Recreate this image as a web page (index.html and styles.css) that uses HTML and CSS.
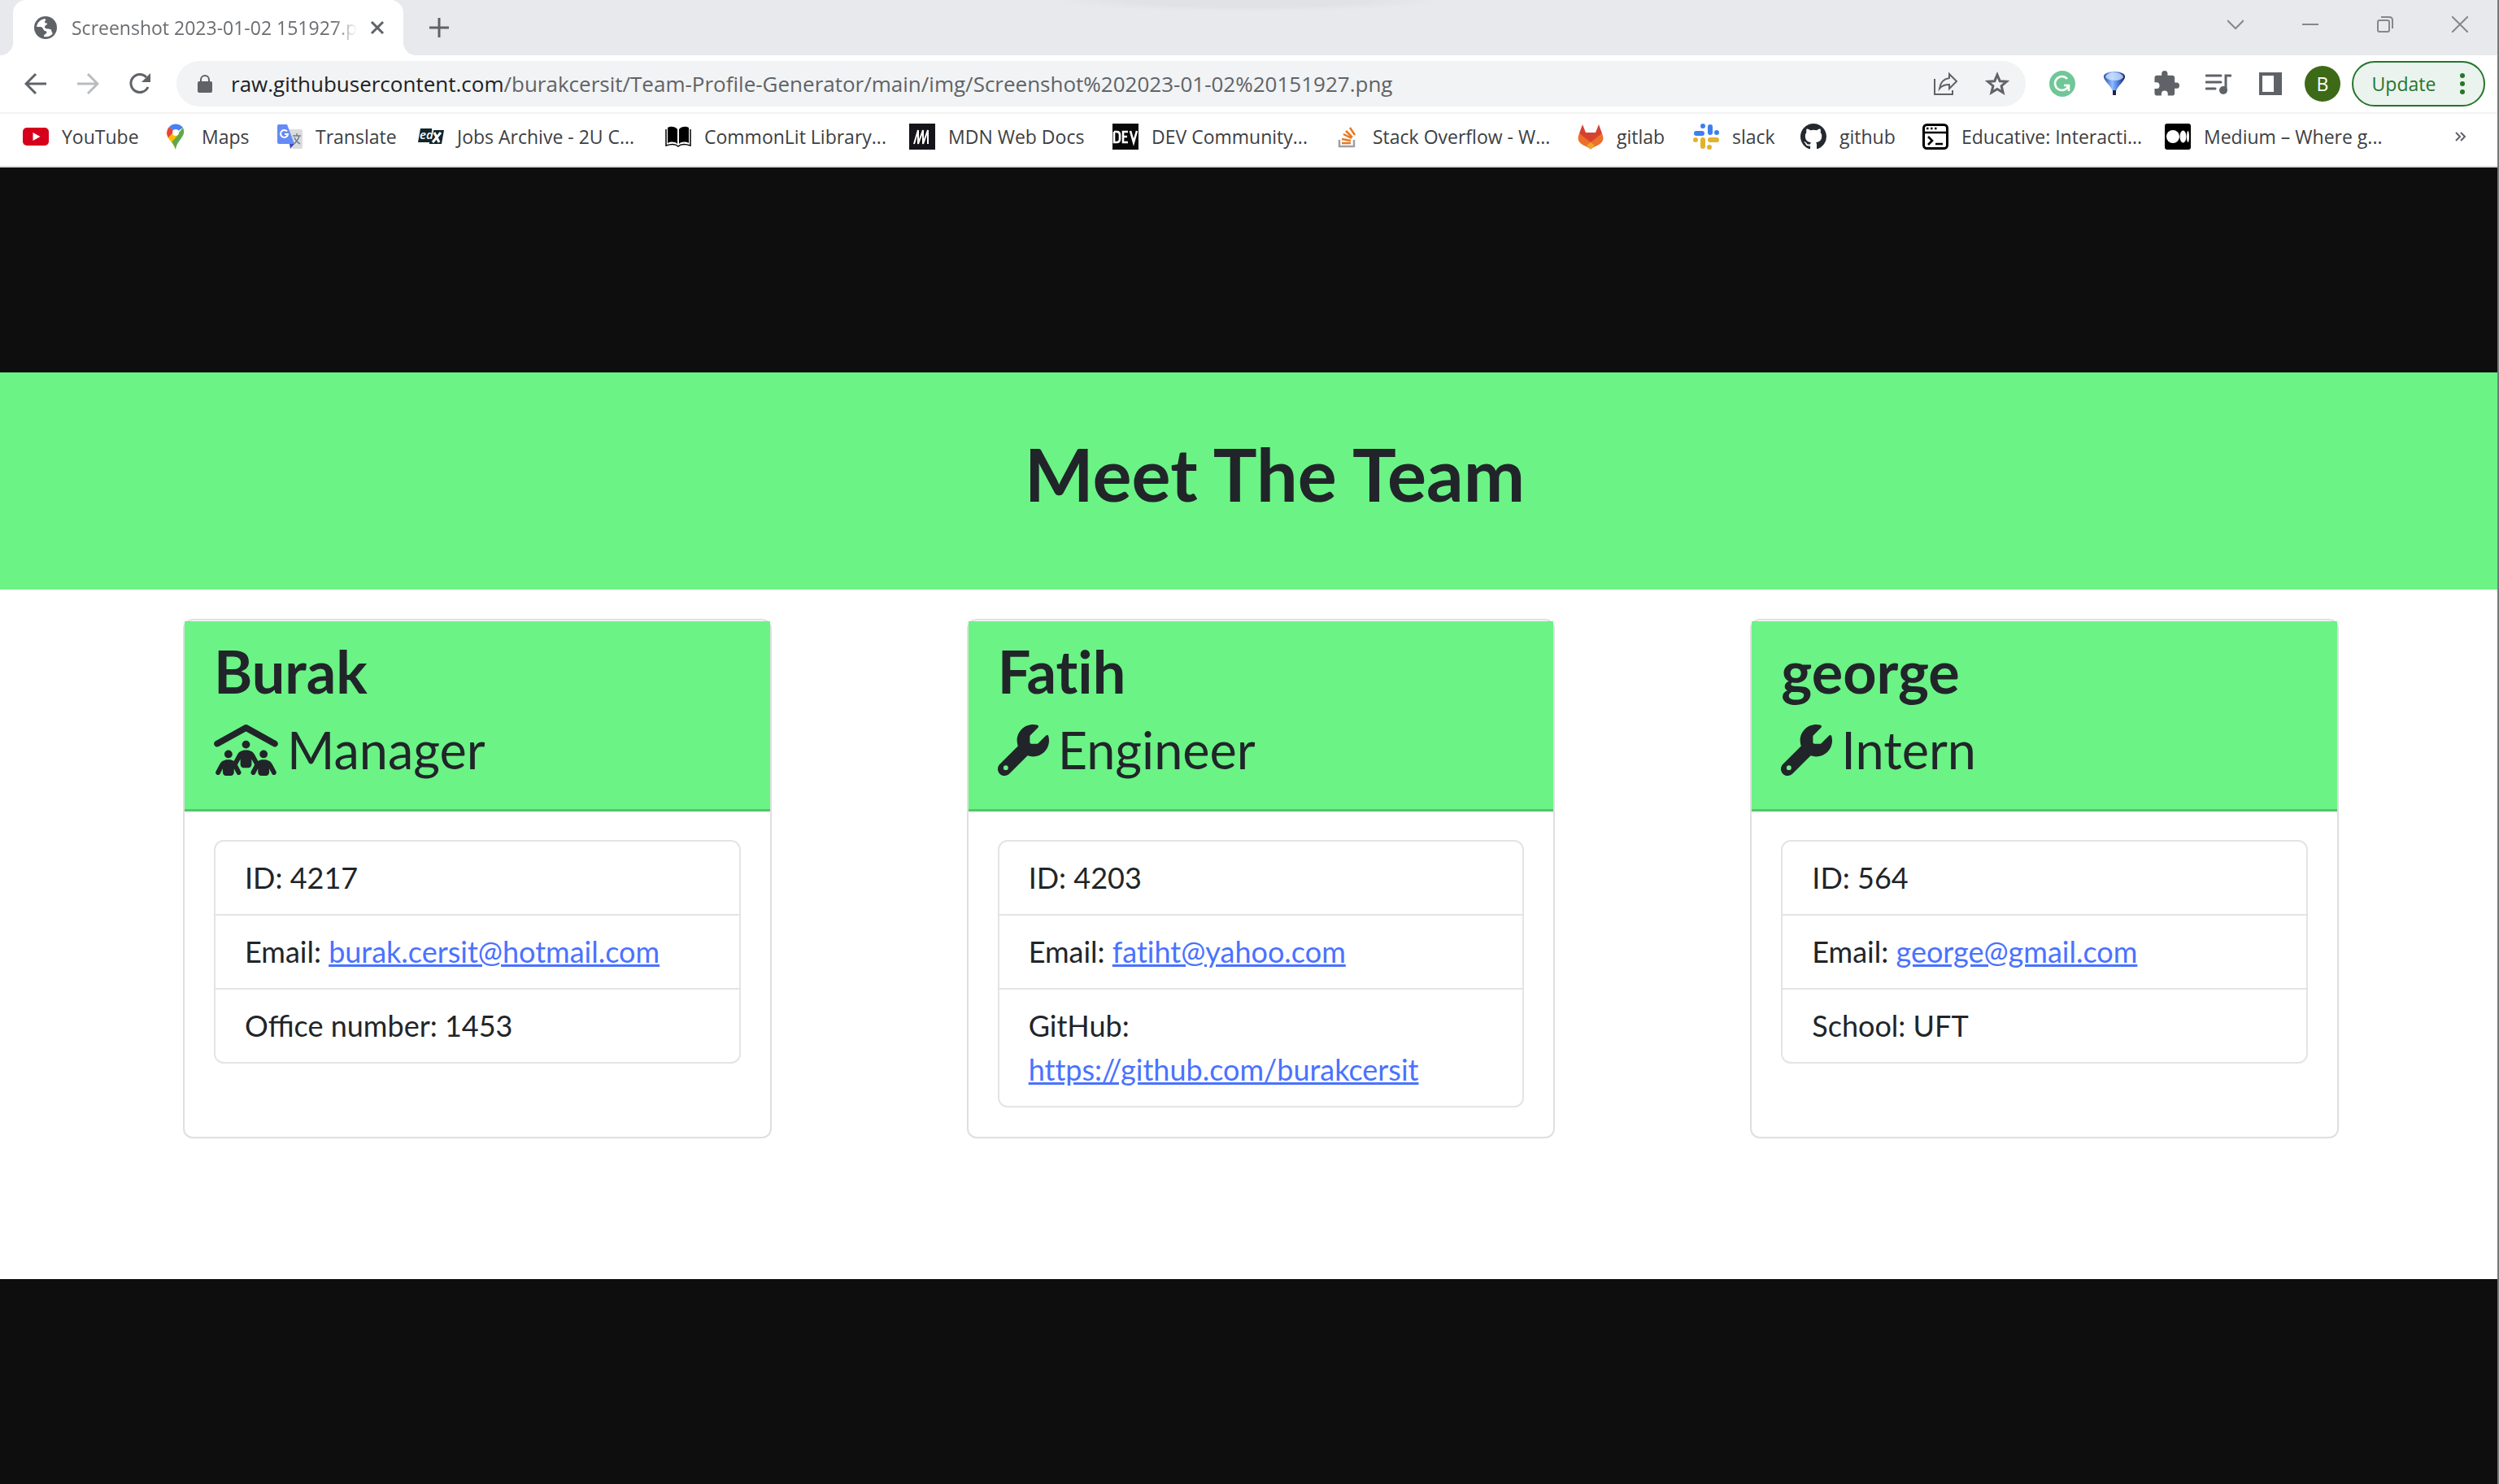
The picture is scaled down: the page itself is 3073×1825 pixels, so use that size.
FILE: index.html
```
<!DOCTYPE html>
<html lang="en">
<head>
<meta charset="utf-8">
<title>Screenshot 2023-01-02 151927.png</title>
<link rel="stylesheet" href="styles.css">
</head>
<body>
<header class="browser">
  <div class="tabstrip">
    <div class="tab">
      <svg class="tab-icon" viewBox="0 0 28 28"><circle cx="14" cy="14" r="14" fill="#5f6368"/><path d="M13 3c-5 1-9 4-10 10h5c3 0 3 4 5 5 2 0 3 1 2 3-1 1-3 1-3 4 5 1 9-1 11-4-2-1-1-4-3-5-3-1-7 0-7-3 0-2 3-2 3-4 0-1-3 0-3-2s3-2 0-4z" fill="#fff"/></svg>
      <span class="tab-title">Screenshot 2023-01-02 151927.p</span>
      <button class="tab-close" aria-label="Close tab"><svg width="18" height="18" viewBox="0 0 18 18"><path d="M2 2l14 14M16 2L2 16" stroke="#5f6368" stroke-width="3"/></svg></button>
    </div>
    <button class="new-tab" aria-label="New tab"><svg width="24" height="24" viewBox="0 0 24 24"><path d="M12 0v24M0 12h24" stroke="#5f6368" stroke-width="3"/></svg></button>
    <div class="window-controls">
      <button aria-label="Search tabs"><svg width="20" height="20" viewBox="0 0 20 20"><path d="M0 5l10 10L20 5" class="thin"/></svg></button>
      <button aria-label="Minimize"><svg width="20" height="20" viewBox="0 0 20 20"><path d="M0 10h20" class="thin"/></svg></button>
      <button aria-label="Restore"><svg width="20" height="20" viewBox="0 0 20 20"><rect x="1" y="5" width="14" height="14" rx="2" class="thin"/><path d="M5 1h10q4 0 4 4v10" class="thin"/></svg></button>
      <button aria-label="Close"><svg width="20" height="20" viewBox="0 0 20 20"><path d="M0 0l20 20M20 0L0 20" class="thin"/></svg></button>
    </div>
  </div>
  <div class="toolbar">
    <div class="nav">
      <button aria-label="Back"><svg width="28" height="28" viewBox="0 0 28 28"><path d="M27 14H3M14 2L2 14l12 12" fill="none" stroke="#5f6368" stroke-width="3"/></svg></button>
      <button aria-label="Forward" disabled><svg width="28" height="28" viewBox="0 0 28 28"><path d="M1 14h24M14 2l12 12-12 12" fill="none" stroke="#babcbe" stroke-width="3"/></svg></button>
      <button aria-label="Reload"><svg width="28" height="28" viewBox="0 0 28 28"><path d="M24 18A11 11 0 1 1 22 6" fill="none" stroke="#5f6368" stroke-width="3"/><path d="M27 1v11H16z" fill="#5f6368"/></svg></button>
    </div>
    <div class="omnibox">
      <svg width="18" height="22" viewBox="0 0 18 22"><rect y="8" width="18" height="14" rx="2" fill="#5f6368"/><path d="M4 9V6a5 5 0 0 1 10 0v3" fill="none" stroke="#5f6368" stroke-width="2"/></svg>
      <div class="url"><span class="host">raw.githubusercontent.com</span>/burakcersit/Team-Profile-Generator/main/img/Screenshot%202023-01-02%20151927.png</div>
      <button aria-label="Share"><svg width="32" height="32" viewBox="0 0 32 32"><path d="M2 10v19h22v-5M20 4l9 9-9 9v-5c-6 0-9 1-12 5 1-8 5-12 12-13z" fill="none" stroke="#5f6368" stroke-width="2"/></svg></button>
      <button aria-label="Bookmark this tab"><svg width="30" height="30" viewBox="0 0 30 30"><path d="M15 4l3.200 7.700 8.300.6-6.400 5.400 2 8.100L15 21.400l-7.100 4.400 2-8.100-6.400-5.400 8.300-.6z" fill="none" stroke="#5f6368" stroke-width="3"/></svg></button>
    </div>
    <div class="extensions">
      <button aria-label="Grammar"><svg width="32" height="32" viewBox="0 0 32 32"><circle cx="16" cy="16" r="16" fill="#6fc797"/><path d="M22 10a8.500 8.500 0 1 0 1.500 8.500M18 18h6v7" fill="none" stroke="#fff" stroke-width="2.600"/></svg></button>
      <button aria-label="Balloon"><svg width="28" height="30" viewBox="0 0 28 30"><defs><linearGradient id="balloon" x1="0" y1="0" x2="1" y2="0"><stop offset="0" stop-color="#2b4fa8"/><stop offset=".4" stop-color="#8fbcff"/><stop offset=".6" stop-color="#5a8cf0"/><stop offset="1" stop-color="#142463"/></linearGradient></defs><path d="M14 0c8 0 14 3 13 7-1 5-8 10-11 17v5h-4v-5C9 17 2 12 1 7 0 3 6 0 14 0z" fill="url(#balloon)"/><path d="M14 1c6 0 11 3 11 6q-3 4-10 4Q7 11 3 7c0-3 5-6 11-6z" fill="#d3e7ff" opacity=".75"/><path d="M12 23h4v6h-4z" fill="#1b2747"/></svg></button>
      <button aria-label="Extensions"><svg width="32" height="32" viewBox="1 1 22 22"><path d="M20.500 11H19V7c0-1.100-.9-2-2-2h-4V3.500a2.500 2.500 0 0 0-5 0V5H4c-1.100 0-2 .9-2 2v3.800h1.500a2.700 2.700 0 0 1 0 5.400H2V20c0 1.100.9 2 2 2h3.800v-1.500a2.700 2.700 0 0 1 5.400 0V22H17c1.100 0 2-.9 2-2v-4h1.500a2.500 2.500 0 0 0 0-5z" fill="#5f6368"/></svg></button>
      <button aria-label="Media"><svg width="32" height="28" viewBox="0 0 32 28"><path d="M1 4h18M1 12h18M1 20h11M25 22V4h6" fill="none" stroke="#5f6368" stroke-width="3" stroke-linecap="round"/><circle cx="22" cy="22" r="5" fill="#5f6368"/></svg></button>
      <button aria-label="Side panel"><svg width="28" height="28" viewBox="0 0 28 28"><path fill-rule="evenodd" d="M0 0h28v28H0zM4 4v20h14V4z" fill="#5f6368"/></svg></button>
      <button class="avatar" aria-label="Profile">B</button>
    </div>
    <button class="update">Update <svg width="6" height="28" viewBox="0 0 6 28"><g fill="#26752b"><circle cx="3" cy="4" r="3"/><circle cx="3" cy="14" r="3"/><circle cx="3" cy="24" r="3"/></g></svg></button>
  </div>
  <nav class="bookmarks">
    <a href="#"><svg viewBox="0 0 32 32"><rect y="5" width="32" height="22" rx="5" fill="#d6001c"/><path d="M12.500 11l9 5-9 5z" fill="#fff"/></svg>YouTube</a>
    <a href="#"><svg viewBox="0 0 32 32"><path d="M16 32c-2-8-11-13-11-21L16 11z" fill="#fbbc04"/><path d="M5 11a11 11 0 0 1 3-7l8 7-9 7q-2-4-2-7z" fill="#ea4335"/><path d="M8 4a11 11 0 0 1 17 1l-9 6z" fill="#4a80f0"/><path d="M25 5c5 11-7 14-9 27-1-3-3-7-5-10z" fill="#5fa84c"/><path d="M7 17l6-6 5 4-7 8z" fill="#fbbc04"/><circle cx="16" cy="11" r="4" fill="#fff"/></svg>Maps</a>
    <a href="#"><svg viewBox="0 0 32 32"><path d="M13 7h17a2 2 0 0 1 2 2v20a2 2 0 0 1-2 2H20z" fill="#dcdcdc"/><path d="M20 15h10M25 12v3M28 15q-2 7-7 10M22 17q2 5 7 8" fill="none" stroke="#6c7f91" stroke-width="1.500"/><path d="M16 25h6l-5 6z" fill="#3c4dba"/><path d="M3 1h10l9 24H3a2 2 0 0 1-2-2V3a2 2 0 0 1 2-2z" fill="#648bf5"/><path d="M13 9.500a4.500 4.500 0 1 0 1 3.500h-4" fill="none" stroke="#fff" stroke-width="2"/></svg>Translate</a>
    <a href="#"><svg viewBox="0 0 32 32"><path d="M3 6h14v2h15l-3 17H14v-2H0z" fill="#12262b"/><text x="2" y="19" class="edx">ed</text><path d="M20 11l6 12M28 11L18 23" stroke="#fff" stroke-width="3"/></svg>Jobs Archive - 2U C...</a>
    <a href="#"><svg viewBox="0 0 32 32"><path d="M15 7C12 3 6 3 3 5v19c4-2 9-2 12 1zM17 7c3-4 9-4 12-2v19c-4-2-9-2-12 1z"/><path d="M1 7v20c6-2 12-2 15 1 3-3 9-3 15-1V7" fill="none" stroke="#000" stroke-width="1.500"/></svg>CommonLit Library...</a>
    <a href="#"><svg viewBox="0 0 32 32"><path d="M0 0h32v32H0z" fill="#15141a"/><path d="M6 25l5-17v17l6-17v17l6-17v17" fill="none" stroke="#fff" stroke-width="2"/></svg>MDN Web Docs</a>
    <a href="#"><svg viewBox="0 0 32 32"><path d="M0 0h32v32H0z" fill="#090909"/><path d="M2 10v13h3q4 0 4-4v-5q0-4-4-4H2M19 10h-6v13h6M13 16h5M22 9l4 14 4-14" fill="none" stroke="#fff" stroke-width="2.600"/></svg>DEV Community...</a>
    <a href="#"><svg viewBox="0 0 32 32"><path d="M7 20v8h18v-8" fill="none" stroke="#9c9fa6" stroke-width="2.500"/><path d="M10 24h11M10 19l11 2M12 13l10 5M15 9l8 8M20 5l6 9" stroke="#e87922" stroke-width="2.500"/></svg>Stack Overflow - W...</a>
    <a href="#"><svg viewBox="0 0 32 32"><path d="M6 1l4 10h12l4-10 4 11-14 19L2 12z" fill="#d64230"/><path d="M2 12l14 11 14-11 1 3q2 7-5 11l-10 5-10-5Q-1 22 1 15z" fill="#ec702b"/><path d="M11 27l5-4 5 4-5 5z" fill="#f0a32a"/></svg>gitlab</a>
    <a href="#"><svg viewBox="0 0 32 32"><g fill="none" stroke-width="6" stroke-linecap="round"><path d="M4 12h7M12 3v0M21 4v7M29 11v0" stroke="#3d7ff0"/><path d="M3 20v0M12 20v8M21 20h8M20 29v0" stroke="#e2b22c"/></g></svg>slack</a>
    <a href="#"><svg viewBox="0 0 16 16"><path fill="#24292f" d="M8 0C3.580 0 0 3.580 0 8c0 3.540 2.290 6.530 5.470 7.590.4.070.55-.17.55-.38 0-.19-.01-.82-.01-1.490-2.010.37-2.530-.49-2.690-.94-.09-.23-.48-.94-.82-1.130-.28-.15-.68-.52-.01-.53.63-.01 1.080.58 1.230.82.72 1.210 1.870.87 2.330.66.07-.52.28-.87.51-1.070-1.780-.2-3.640-.89-3.640-3.950 0-.87.31-1.590.82-2.150-.08-.2-.36-1.020.08-2.120 0 0 .67-.21 2.200.82.64-.18 1.320-.27 2-.27s1.360.09 2 .27c1.530-1.040 2.200-.82 2.200-.82.44 1.100.16 1.920.08 2.120.51.56.82 1.270.82 2.150 0 3.070-1.870 3.750-3.650 3.950.29.25.54.73.54 1.480 0 1.070-.01 1.930-.01 2.200 0 .21.15.46.55.38A8.010 8.010 0 0 0 16 8c0-4.420-3.580-8-8-8z"/></svg>github</a>
    <a href="#"><svg viewBox="0 0 32 32"><rect x="1.500" y="1.500" width="29" height="29" rx="4" fill="#fff" stroke="#000" stroke-width="3"/><path d="M2 11h28M7 16l5 5-5 5M16 25h9" fill="none" stroke="#000" stroke-width="2.600"/><path d="M5 6h2.500M10 6h2.500M15 6h2.500" stroke="#000" stroke-width="2.500"/></svg>Educative: Interacti...</a>
    <a href="#"><svg viewBox="0 0 32 32"><rect width="32" height="32" rx="3"/><g fill="#fff"><circle cx="10" cy="16" r="8"/><ellipse cx="22.500" cy="16" rx="4" ry="7.500"/><ellipse cx="28.500" cy="16" rx="1.500" ry="7"/></g></svg>Medium – Where g...</a>
    <button class="more" aria-label="More bookmarks"><svg width="14" height="12" viewBox="0 0 14 12"><path d="M1 1l5 5-5 5M7 1l5 5-5 5" fill="none" stroke="#5f6368" stroke-width="2"/></svg></button>
  </nav>
</header>
<main class="viewer">
  <div class="page">
    <header class="banner"><h1>Meet The Team</h1></header>
    <section class="team">
      <article class="card">
        <header class="card-head">
          <h2>Burak</h2>
          <h3><svg class="roof" viewBox="0 0 640 512"><path d="M335.500 4l288 160c15.400 8.600 21 28.100 12.400 43.500s-28.100 21-43.500 12.400L320 68.600 47.500 220c-15.400 8.600-34.900 3-43.500-12.400s-3-34.900 12.400-43.500L304.500 4c9.700-5.400 21.400-5.400 31.100 0zM320 160a40 40 0 1 1 0 80 40 40 0 1 1 0-80zM144 256a40 40 0 1 1 0 80 40 40 0 1 1 0-80zm312 40a40 40 0 1 1 80 0 40 40 0 1 1-80 0zM226.900 491.400L200 441.500V480c0 17.700-14.300 32-32 32H120c-17.700 0-32-14.300-32-32V441.500L61.100 491.400c-6.300 11.700-20.800 16-32.500 9.800s-16-20.800-9.800-32.500l37.900-70.300c15.300-28.500 45.100-46.300 77.500-46.300h19.500c16.300 0 31.900 4.500 45.400 12.600l33.600-62.300c15.300-28.500 45.100-46.300 77.500-46.300h19.500c32.400 0 62.100 17.800 77.500 46.300l33.600 62.300c13.500-8.100 29.100-12.600 45.400-12.600h19.500c32.400 0 62.100 17.800 77.500 46.300l37.900 70.300c6.300 11.700 1.900 26.200-9.800 32.500s-26.200 1.900-32.500-9.800L552 441.500V480c0 17.700-14.300 32-32 32H472c-17.700 0-32-14.300-32-32V441.500l-26.900 49.900c-6.300 11.700-20.800 16-32.500 9.800s-16-20.800-9.800-32.500l36.300-67.500c-1.700-1.700-3.200-3.600-4.300-5.800L376 345.500V400c0 17.700-14.300 32-32 32H296c-17.700 0-32-14.300-32-32V345.500l-26.900 49.900c-1.200 2.200-2.600 4.100-4.300 5.800l36.300 67.500c6.300 11.700 1.900 26.200-9.800 32.500s-26.200 1.900-32.500-9.800z"/></svg>Manager</h3>
        </header>
        <ul class="facts">
          <li>ID: 4217</li>
          <li>Email: <a href="mailto:burak.cersit@hotmail.com">burak.cersit@hotmail.com</a></li>
          <li>Office number: 1453</li>
        </ul>
      </article>
      <article class="card">
        <header class="card-head">
          <h2>Fatih</h2>
          <h3><svg class="wrench" viewBox="0 0 512 512"><path d="M352 320c88.400 0 160-71.600 160-160c0-15.300-2.200-30.100-6.200-44.200c-3.100-10.800-16.400-13.200-24.300-5.300l-76.800 76.800c-3 3-7.100 4.700-11.300 4.700H336c-8.800 0-16-7.200-16-16V118.600c0-4.200 1.700-8.300 4.700-11.300l76.800-76.800c7.900-7.900 5.400-21.200-5.300-24.300C382.100 2.200 367.300 0 352 0C263.600 0 192 71.600 192 160c0 19.100 3.400 37.500 9.500 54.500L19.900 396.100C7.200 408.800 0 426.100 0 444.100C0 481.600 30.400 512 67.900 512c18 0 35.300-7.200 48-19.900L297.500 310.500c17 6.200 35.400 9.500 54.500 9.500zM80 408a24 24 0 1 1 0 48 24 24 0 1 1 0-48z"/></svg>Engineer</h3>
        </header>
        <ul class="facts">
          <li>ID: 4203</li>
          <li>Email: <a href="mailto:fatiht@yahoo.com">fatiht@yahoo.com</a></li>
          <li>GitHub: <a href="https://github.com/burakcersit">https://github.com/burakcersit</a></li>
        </ul>
      </article>
      <article class="card">
        <header class="card-head">
          <h2>george</h2>
          <h3><svg class="wrench" viewBox="0 0 512 512"><path d="M352 320c88.400 0 160-71.600 160-160c0-15.300-2.200-30.100-6.200-44.200c-3.100-10.800-16.400-13.200-24.300-5.300l-76.800 76.800c-3 3-7.100 4.700-11.300 4.700H336c-8.800 0-16-7.200-16-16V118.600c0-4.200 1.700-8.300 4.700-11.300l76.800-76.800c7.900-7.900 5.400-21.200-5.300-24.300C382.100 2.200 367.300 0 352 0C263.600 0 192 71.600 192 160c0 19.100 3.400 37.500 9.500 54.500L19.900 396.100C7.200 408.800 0 426.100 0 444.100C0 481.600 30.400 512 67.900 512c18 0 35.300-7.200 48-19.900L297.500 310.500c17 6.200 35.400 9.500 54.500 9.500zM80 408a24 24 0 1 1 0 48 24 24 0 1 1 0-48z"/></svg>Intern</h3>
        </header>
        <ul class="facts">
          <li>ID: 564</li>
          <li>Email: <a href="mailto:george@gmail.com">george@gmail.com</a></li>
          <li>School: UFT</li>
        </ul>
      </article>
    </section>
  </div>
</main>
</body>
</html>
```
FILE: styles.css
```
* { box-sizing: border-box; }
body {
  margin: 0;
  min-height: 100vh;
  display: flex;
  flex-direction: column;
  background: #0e0e0e;
  font-family: "Open Sans", "Noto Sans", sans-serif;
  border-right: 2px solid #777;
}
h1, h2, h3, ul { margin: 0; padding: 0; }
button {
  display: flex;
  align-items: center;
  justify-content: center;
  padding: 0;
  border: 0;
  background: none;
  font: inherit;
}
svg { flex: none; }

/* Browser chrome */
.browser { background: #fff; border-bottom: 2px solid #dcdcdc; }
.tabstrip {
  display: flex;
  height: 68px;
  padding-left: 16px;
  background: radial-gradient(ellipse 240px 14px at 50% 0, #e1e2e5 60%, #e8e9ed) #e8e9ed;
}
.tab {
  position: relative;
  display: flex;
  align-items: center;
  width: 480px;
  padding: 0 23px 0 26px;
  background: #fff;
  border-radius: 16px 16px 0 0;
}
.tab::before, .tab::after {
  content: "";
  position: absolute;
  bottom: 0;
  width: 16px;
  height: 16px;
}
.tab::before { left: -16px; background: radial-gradient(circle at 0 0, transparent 16px, #fff 16px); }
.tab::after { right: -16px; background: radial-gradient(circle at 100% 0, transparent 16px, #fff 16px); }
.tab-icon { width: 28px; height: 28px; }
.tab-title {
  flex: 1;
  margin: 0 16px 0 18px;
  white-space: nowrap;
  font-size: 23px;
  color: #6a6d71;
  mask-image: linear-gradient(to right, #000 92%, transparent);
}
.new-tab { width: 88px; }
.window-controls { display: flex; height: 60px; margin-left: auto; }
.window-controls button { width: 92px; }
.thin { fill: none; stroke: #868789; stroke-width: 2; }

.toolbar { display: flex; align-items: center; height: 72px; padding-right: 15px; border-bottom: 2px solid #f2f2f2; }
.nav { display: flex; width: 217px; padding-left: 12px; }
.nav button { width: 64px; }
.omnibox {
  flex: 1;
  display: flex;
  align-items: center;
  height: 56px;
  padding: 0 20px 0 26px;
  background: #f1f3f4;
  border-radius: 28px;
}
.url { flex: 1; margin-left: 23px; font-size: 26px; color: #5f6368; }
.host { color: #202124; }
.omnibox button { margin-left: 32px; }
.extensions { display: flex; align-items: center; padding: 0 4px 0 13px; }
.extensions button { width: 64px; }
.extensions .avatar {
  width: 44px;
  height: 44px;
  margin: 0 10px;
  border-radius: 50%;
  background: #3c6a17;
  color: #fff;
  font-size: 23px;
}
.update {
  gap: 30px;
  width: 164px;
  height: 56px;
  border: 2px solid #26752b;
  border-radius: 28px;
  background: #ebf3ee;
  color: #26752b;
  font-size: 23px;
}
.bookmarks {
  display: grid;
  grid-template-columns: 172px 140px 174px 304px 300px 250px 272px 300px 142px 132px 150px 298px 1fr auto;
  align-items: center;
  height: 64px;
  padding: 0 38px 8px 28px;
}
.bookmarks a {
  display: flex;
  align-items: center;
  gap: 16px;
  color: #3c4043;
  font-size: 23px;
  text-decoration: none;
  white-space: nowrap;
}
.bookmarks a svg { width: 32px; height: 32px; }
.edx { font-size: 15px; font-style: italic; font-weight: 600; fill: #fff; }

/* Displayed page */
.viewer { flex: 1; display: flex; align-items: center; }
.page {
  width: 100%;
  padding-bottom: 173px;
  background: #fff;
  color: #212529;
  font-family: Lato, sans-serif;
  font-size: 36px;
  line-height: 54px;
}
.banner { padding: 70px 0 89px 64px; background: #6bf386; text-align: center; }
.banner h1 { font-size: 90px; line-height: 108px; font-weight: 700; }
.team {
  display: grid;
  grid-template-columns: repeat(3, 1fr);
  column-gap: 240px;
  padding: 36px 195px 0 225px;
}
.card { padding-top: 1px; border: 2px solid #dfdfdf; border-radius: 12px; }
.card-head {
  padding: 18px 36px 35px;
  background: #6bf386;
  border-bottom: 3px solid #57c46c;
}
.card h2 {
  margin-bottom: 16px;
  font-size: 72px;
  line-height: 86px;
  font-weight: 700;
  font-variant-ligatures: none;
}
.card h3 { display: flex; align-items: center; gap: 11px; font-size: 63px; line-height: 76px; font-weight: 400; }
.card h3 svg { height: 63px; fill: #212529; }
.roof { width: 79px; }
.wrench { width: 63px; }
.facts { margin: 35px 36px 36px; border: 2px solid #e4e4e4; border-radius: 12px; list-style: none; }
.facts li { padding: 17px 36px 18px; }
.facts li + li { border-top: 2px solid #e4e4e4; }
.facts a { color: #4a72ff; font-variant-ligatures: none; }
```
